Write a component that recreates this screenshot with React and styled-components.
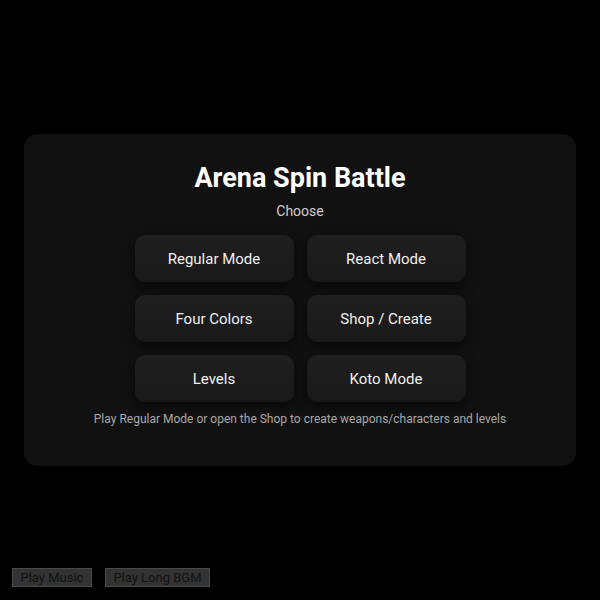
import React from "react";
import styled, { createGlobalStyle } from "styled-components";

const Global = createGlobalStyle`
  html, body { margin: 0; padding: 0; background: #000; }
  body { font-family: Roboto, "Noto Sans", Arial, sans-serif; color: #fff; }
`;

const Page = styled.div`
  height: 600px;
  display: flex;
  align-items: center;
  justify-content: center;
  padding: 0 24px;
  box-sizing: border-box;
`;

const Card = styled.div`
  width: 100%;
  background: #111111;
  border-radius: 14px;
  padding: 28px 20px 39px;
  box-sizing: border-box;
  display: flex;
  flex-direction: column;
  align-items: center;
`;

const Title = styled.h1`
  margin: 0;
  font-size: 27px;
  line-height: 32px;
  font-weight: 700;
  color: #fff;
`;

const Subtitle = styled.div`
  margin-top: 8px;
  font-size: 14px;
  line-height: 18px;
  color: #cfcfcf;
`;

const Grid = styled.div`
  margin-top: 15px;
  display: grid;
  grid-template-columns: 159px 159px;
  gap: 13px;
`;

const ModeButton = styled.button`
  height: 47px;
  border: none;
  border-radius: 10px;
  background: linear-gradient(180deg, #1f1f1f 0%, #191919 100%);
  box-shadow: 0 4px 12px rgba(0, 0, 0, 0.55);
  color: #f0f0f0;
  font-family: inherit;
  font-size: 15px;
  cursor: pointer;
`;

const Hint = styled.div`
  margin-top: 9px;
  font-size: 12px;
  line-height: 16px;
  color: #a8a8a8;
`;

const AudioBar = styled.div`
  position: fixed;
  left: 12px;
  bottom: 13px;
  display: flex;
  gap: 13px;
`;

const AudioButton = styled.button`
  height: 19px;
  padding: 0 7.5px;
  background: #333;
  border: 1px solid #4a4a4a;
  border-radius: 0;
  color: #111;
  font-family: Roboto, Arial, sans-serif;
  font-size: 13px;
  line-height: 17px;
`;

const modes = ["Regular Mode", "React Mode", "Four Colors", "Shop / Create", "Levels", "Koto Mode"];

export default function App() {
  return (
    <>
      <Global />
      <Page>
        <Card>
          <Title>Arena Spin Battle</Title>
          <Subtitle>Choose</Subtitle>
          <Grid>
            {modes.map((m) => (
              <ModeButton key={m}>{m}</ModeButton>
            ))}
          </Grid>
          <Hint>Play Regular Mode or open the Shop to create weapons/characters and levels</Hint>
        </Card>
      </Page>
      <AudioBar>
        <AudioButton>Play Music</AudioButton>
        <AudioButton>Play Long BGM</AudioButton>
      </AudioBar>
    </>
  );
}
